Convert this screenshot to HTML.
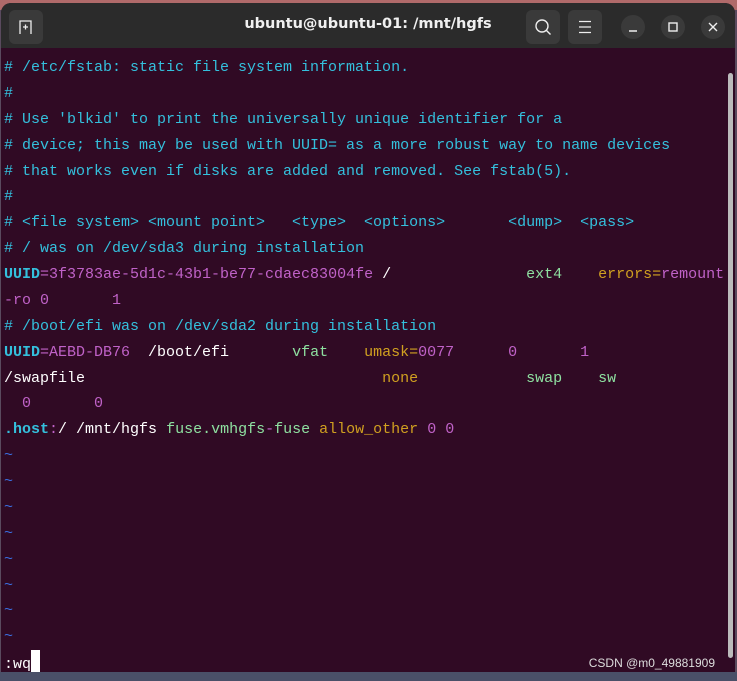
<!DOCTYPE html>
<html><head><meta charset="utf-8"><style>
html,body{margin:0;padding:0;width:737px;height:681px;overflow:hidden;background:#5a4a5e;}
.bgtop{position:absolute;left:0;top:0;width:737px;height:10px;background:#b06a6a;}
.bgbot{position:absolute;left:0;top:672px;width:737px;height:9px;background:#4a5068;}
.win{position:absolute;left:1px;top:3px;width:734px;height:669px;background:#300a24;border-radius:10px 10px 0 0;overflow:hidden;}
.tb{position:absolute;left:0;top:0;width:734px;height:45px;background:#2b2b2b;}
.title{position:absolute;left:0;width:734px;top:13px;text-align:center;color:#f0f0f0;font:bold 14.5px "DejaVu Sans",sans-serif;}
.btn{position:absolute;top:7px;width:34px;height:34px;background:#3a3a3a;border-radius:6px;}
.cb{position:absolute;top:12px;width:24px;height:24px;background:#3a3a3a;border-radius:50%;}
.term{position:absolute;left:3px;top:52px;font:15px/25.87px "Liberation Mono",monospace;color:#fff;white-space:pre;}
.c{color:#34c0dd}.b{color:#34c0dd;font-weight:bold}.m{color:#c062c8}.g{color:#8ee0a0}.y{color:#d0a020}.t{color:#3a6ee0}
.sb{position:absolute;left:727px;top:70px;width:5px;height:585px;background:#bbb;border-radius:3px;}
.cur{display:inline-block;width:9px;height:24px;background:#fff;vertical-align:-6px;}
.wm{position:absolute;right:22px;top:656px;color:#ddd;font:12px "Liberation Sans",sans-serif;}
</style></head><body>
<div class="bgtop"></div><div class="bgbot"></div>
<div class="win">
<div class="tb">
<div class="btn" style="left:8px"><svg width="34" height="34"><path d="M11 24V11h11v13M14 17h5M16.5 14.5v5" stroke="#eee" stroke-width="1.3" fill="none"/></svg></div>
<div class="title">ubuntu@ubuntu-01: /mnt/hgfs</div>
<div class="btn" style="left:525px"><svg width="34" height="34"><circle cx="16" cy="16" r="6" stroke="#eee" stroke-width="1.4" fill="none"/><path d="M20.5 20.5l4 4" stroke="#eee" stroke-width="1.4"/></svg></div>
<div class="btn" style="left:567px"><svg width="34" height="34"><path d="M11 11.5h12M11 17h12M11 22.5h12" stroke="#eee" stroke-width="1.3"/></svg></div>
<div class="cb" style="left:620px"><svg width="24" height="24"><path d="M8 16h8" stroke="#eee" stroke-width="1.5"/></svg></div>
<div class="cb" style="left:660px"><svg width="24" height="24"><rect x="8" y="8" width="8" height="8" stroke="#eee" stroke-width="1.4" fill="none"/></svg></div>
<div class="cb" style="left:700px"><svg width="24" height="24"><path d="M8 8l8 8M16 8l-8 8" stroke="#eee" stroke-width="1.4"/></svg></div>
</div>
<div class="term"><span class="c"># /etc/fstab: static file system information.
#
# Use 'blkid' to print the universally unique identifier for a
# device; this may be used with UUID= as a more robust way to name devices
# that works even if disks are added and removed. See fstab(5).
#
# &lt;file system&gt; &lt;mount point&gt;   &lt;type&gt;  &lt;options&gt;       &lt;dump&gt;  &lt;pass&gt;
# / was on /dev/sda3 during installation</span>
<span class="b">UUID</span><span class="m">=3f3783ae-5d1c-43b1-be77-cdaec83004fe</span> /               <span class="g">ext4</span>    <span class="y">errors=</span><span class="m">remount</span>
<span class="m">-ro 0       1</span>
<span class="c"># /boot/efi was on /dev/sda2 during installation</span>
<span class="b">UUID</span><span class="m">=AEBD-DB76</span>  /boot/efi       <span class="g">vfat</span>    <span class="y">umask=</span><span class="m">0077</span>      <span class="m">0</span>       <span class="m">1</span>
/swapfile                                 <span class="y">none</span>            <span class="g">swap</span>    <span class="g">sw</span>
  <span class="m">0</span>       <span class="m">0</span>
<span class="b">.host</span><span class="m">:</span>/ /mnt/hgfs <span class="g">fuse.vmhgfs</span><span class="m">-</span><span class="g">fuse</span> <span class="y">allow_other</span> <span class="m">0 0</span>
<span class="t">~
~
~
~
~
~
~
~</span>
:wq<span class="cur"></span></div>
<div class="sb"></div>
</div>
<div class="wm">CSDN @m0_49881909</div>
</body></html>
